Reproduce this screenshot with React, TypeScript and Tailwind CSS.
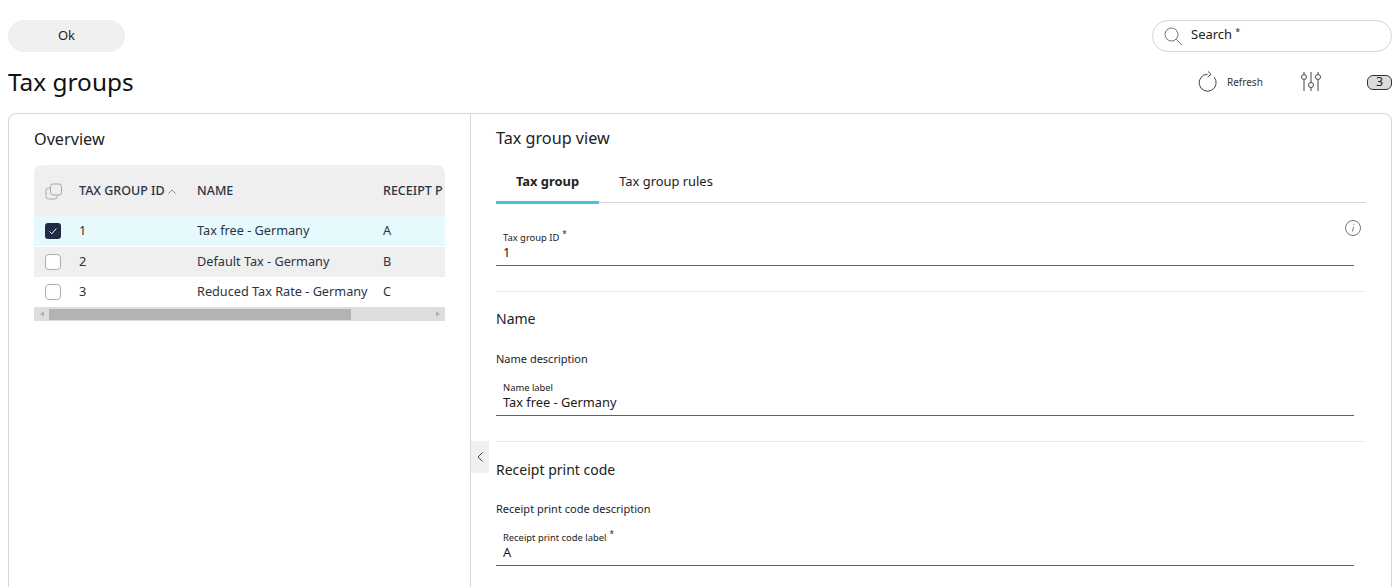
const rows = [
  { id: '1', name: 'Tax free - Germany', code: 'A', checked: true, rowClass: 'h-[31px] bg-[#e6f9fd]' },
  { id: '2', name: 'Default Tax - Germany', code: 'B', checked: false, rowClass: 'h-[31px] bg-[#efefef]' },
  { id: '3', name: 'Reduced Tax Rate - Germany', code: 'C', checked: false, rowClass: 'h-[30px] bg-white pb-[1px]' },
];

function Checkbox({ checked }: { checked: boolean }) {
  if (checked) {
    return (
      <div className="flex h-4 w-4 items-center justify-center rounded-[3px] bg-[#1f2d44]">
        <svg viewBox="0 0 16 16" className="h-4 w-4" fill="none" stroke="#fff" strokeWidth="1">
          <path d="M4.5 8.5l2.3 2.3 4.5-5.3" />
        </svg>
      </div>
    );
  }
  return <div className="h-4 w-4 rounded-[4px] border border-[#a9adb5] bg-white" />;
}

function Field({ label, value, required }: { label: string; value: string; required?: boolean }) {
  return (
    <div className="mr-3 h-[38px] border-b border-[#5f5f5f] pl-[7px] pt-[2px]">
      <div className="h-[15px] text-[9.4px] leading-[15px] text-[#222]">
        {label}
        {required && <sup className="ml-[3px] text-[8px] leading-none">*</sup>}
      </div>
      <div className="h-[15px] text-[12.8px] leading-[15px] text-[#1a1a1a]">{value}</div>
    </div>
  );
}

export default function App() {
  return (
    <div className="h-[587px] w-[1400px] overflow-hidden bg-white font-['Noto_Sans',sans-serif] text-[#1a1a1a]">
      <div className="flex items-start justify-between px-2 pt-5">
        <button className="h-8 w-[117px] rounded-full bg-[#f0f0f0] text-[13px] text-[#222]">Ok</button>
        <div className="flex h-8 w-[240px] items-center rounded-full border border-[#d4d4d4] pl-[10px]">
          <svg viewBox="0 0 20 20" className="h-5 w-5" fill="none" stroke="#555" strokeWidth="0.8">
            <circle cx="8.5" cy="8.5" r="6.5" />
            <path d="M13.3 13.3l5.7 5.7" />
          </svg>
          <span className="-mt-[2px] ml-2 text-[13px] text-[#222]">
            Search<sup className="ml-[3px] text-[9px]">*</sup>
          </span>
        </div>
      </div>

      <div className="flex h-[60px] items-center justify-between px-2">
        <h1 className="text-[24.4px] leading-8 text-[#111]">Tax groups</h1>
        <div className="flex items-center">
          <svg viewBox="0 0 20 22" className="h-[22px] w-5" fill="none" stroke="#444" strokeWidth="1">
            <path d="M16.200 6.300A8.500 8.500 0 1 1 9.500 3.200" />
            <path d="M9.800 0.300l3.300 3-3.300 2.600" />
          </svg>
          <span className="ml-[9px] w-[37px] text-[10px] text-[#333]">Refresh</span>
          <svg viewBox="0 0 22 22" className="ml-[36px] h-[22px] w-[22px]" fill="none" stroke="#444" strokeWidth="1">
            <path d="M4 1v2.500M4 8.500V20M11 1v10.500M11 16.500V20M18 1v2.500M18 8.500V20" />
            <circle cx="4" cy="6" r="2.500" />
            <circle cx="11" cy="14" r="2.500" />
            <circle cx="18" cy="6" r="2.500" />
          </svg>
          <div className="ml-[45px] flex h-[15px] w-[25px] items-center justify-center rounded-[6px] border border-[#333] bg-[#dcdcdc] text-[12.5px] leading-none text-[#222]">
            3
          </div>
        </div>
      </div>

      <div className="relative mx-2 mt-[1px] flex h-[520px] rounded-t-lg border border-[#d6d6d6]">
        <section className="w-[462px] border-r border-[#d6d6d6] pl-[25px] pt-[14px]">
          <h2 className="text-[16.2px] leading-[22px] text-[#222]">Overview</h2>
          <div className="mt-[15px] w-[411px] overflow-hidden rounded-t-lg">
            <div className="grid h-[51px] grid-cols-[45px_118px_186px_62px] items-center whitespace-nowrap bg-[#efefef] pt-[2px] text-[12.5px] font-medium text-[#2b3342]">
              <div className="pl-[11px]">
                <svg viewBox="0 0 18 18" className="h-[18px] w-[18px]" fill="none" stroke="#a8a8ac" strokeWidth="1">
                  <rect x="5.500" y="1" width="11" height="11" rx="2.500" />
                  <path d="M5 5H3.500A2.500 2.500 0 0 0 1 7.500v6A2.500 2.500 0 0 0 3.500 16h6a2.500 2.500 0 0 0 2.500-2.500V12.500" />
                </svg>
              </div>
              <div className="flex items-center">
                TAX GROUP ID
                <svg viewBox="0 0 8 5" className="ml-[3px] h-[5px] w-2" fill="none" stroke="#666" strokeWidth="0.7">
                  <path d="M0.500 4.500L4 1l3.500 3.500" />
                </svg>
              </div>
              <div>NAME</div>
              <div className="overflow-hidden">RECEIPT P</div>
            </div>
            {rows.map((row) => (
              <div
                key={row.id}
                className={`grid grid-cols-[45px_118px_186px_62px] items-center whitespace-nowrap border-b border-white text-[12.7px] text-[#2b3342] ${row.rowClass}`}
              >
                <div className="pl-[11px]">
                  <Checkbox checked={row.checked} />
                </div>
                <div>{row.id}</div>
                <div>{row.name}</div>
                <div>{row.code}</div>
              </div>
            ))}
            <div className="-mt-[1px] flex h-[14px] items-center bg-[#dedede]">
              <div className="flex w-[15px] justify-center">
                <svg viewBox="0 0 4 6" className="h-[6px] w-1" fill="#b5b5b5">
                  <path d="M4 0v6L0 3z" />
                </svg>
              </div>
              <div className="h-[11px] w-[302px] bg-[#b3b3b3]" />
              <div className="flex flex-1 justify-end pr-[5px]">
                <svg viewBox="0 0 4 6" className="h-[6px] w-1" fill="#b5b5b5">
                  <path d="M0 0v6l4-3z" />
                </svg>
              </div>
            </div>
          </div>
        </section>

        <section className="flex-1 px-[25px] pt-[13px]">
          <h2 className="text-[16.2px] leading-[22px] text-[#222]">Tax group view</h2>
          <div className="mt-[15px] flex h-[39px] border-b border-[#d6d6d6] text-[12.9px]">
            <div className="h-[40px] w-[103px] border-b-[3px] border-[#4bbfdc] pt-[8px] text-center font-bold text-[#222]">
              Tax group
            </div>
            <div className="w-[134px] pt-[8px] text-center text-[#222]">Tax group rules</div>
          </div>

          <div className="relative mt-[25px]">
            <Field label="Tax group ID" value="1" required />
            <svg viewBox="0 0 16 16" className="absolute -top-[8px] right-[5px] h-4 w-4" fill="none" stroke="#777" strokeWidth="1">
              <circle cx="8" cy="8" r="7.500" />
              <path d="M8.500 7l-1 4.500M8.700 4.300v1" />
            </svg>
          </div>
          <div className="mt-[25px] border-t border-[#ececec] pt-[17px] text-[14px] leading-5 text-[#222]">Name</div>
          <div className="mt-[20px] text-[11px] leading-5 text-[#222]">Name description</div>
          <div className="mt-[9px]">
            <Field label="Name label" value="Tax free - Germany" />
          </div>
          <div className="mt-[25px] border-t border-[#ececec] pt-[18px] text-[14px] leading-5 text-[#222]">Receipt print code</div>
          <div className="mt-[19px] text-[11px] leading-5 text-[#222]">Receipt print code description</div>
          <div className="mt-[9px]">
            <Field label="Receipt print code label" value="A" required />
          </div>
        </section>

        <button className="absolute left-[462px] top-[327px] flex h-8 w-[18px] items-center justify-center bg-[#f0f0f0]">
          <svg viewBox="0 0 6 10" className="h-[10px] w-[6px]" fill="none" stroke="#444" strokeWidth="1">
            <path d="M5.500 0.500L1 5l4.500 4.500" />
          </svg>
        </button>
      </div>
    </div>
  );
}
